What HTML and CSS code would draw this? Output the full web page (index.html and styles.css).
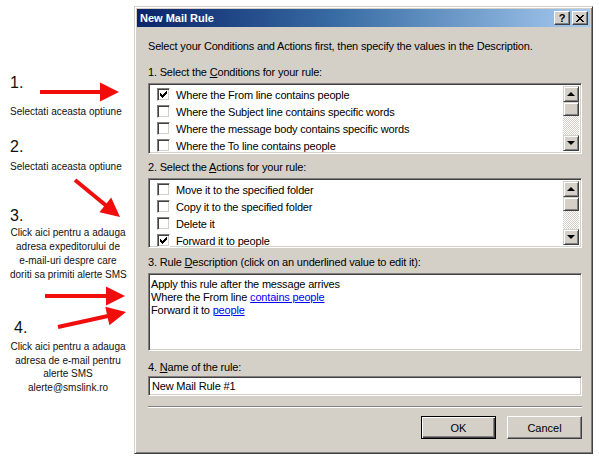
FILE: index.html
```html
<!DOCTYPE html>
<html lang="ro">
  <head>
    <meta charset="UTF-8" />
    <title>New Mail Rule</title>
    <link rel="stylesheet" href="styles.css">
  </head>
  <body>
    <aside class="notes">
      <div class="num">1.</div>
      <p class="hint hint-1">Selectati aceasta optiune</p>
      <div class="num num-2">2.</div>
      <p class="hint hint-2">Selectati aceasta optiune</p>
      <div class="num num-3">3.</div>
      <p class="hint hint-3">Click aici pentru a adauga<br />adresa expeditorului de<br />e-mail-uri despre care<br />doriti sa primiti alerte SMS</p>
      <div class="num num-4">4.</div>
      <p class="hint hint-4">Click aici pentru a adauga<br />adresa de e-mail pentru<br />alerte SMS<br />alerte@smslink.ro</p>

      <!-- red pointer arrows -->
      <svg class="arrows" width="134" height="465" viewBox="0 0 134 465">
        <g stroke="#f20d0d" stroke-width="4" fill="none">
          <line x1="40" y1="92" x2="102" y2="92" />
          <line x1="75" y1="180" x2="106" y2="205.5" />
          <line x1="45" y1="296" x2="108" y2="296" />
          <line x1="58" y1="327" x2="108" y2="316" />
        </g>
        <g fill="#f20d0d">
          <polygon points="100,82.5 119,92 100,101.5" />
          <polygon points="99.4,212.2 120,217 111.2,197.6" />
          <polygon points="106,286.5 125,296 106,305.5" />
          <polygon points="109.4,325.3 126,312 105.3,306.7" />
        </g>
      </svg>
    </aside>

    <main class="dialog">
      <div class="titlebar">
        <span class="title">New Mail Rule</span>
        <span class="cap-btn cap-help">?</span>
        <span class="cap-btn cap-close">
          <svg width="8" height="7" viewBox="0 0 8 7">
            <path d="M0 0h2v1h1v1h2v-1h1v-1h2v1h-1v1h-1v1h-1v1h1v1h1v1h1v1h-2v-1h-1v-1h-2v1h-1v1h-2v-1h1v-1h1v-1h1v-1h-1v-1h-1v-1h-1z" fill="#000" />
          </svg>
        </span>
      </div>

      <div class="content">
        <p class="intro">Select your Conditions and Actions first, then specify the values in the Description.</p>

        <p class="label label-1">1. Select the <u>C</u>onditions for your rule:</p>
        <div class="listbox">
          <ul class="rows">
            <li><span class="check on"></span>Where the From line contains people</li>
            <li><span class="check"></span>Where the Subject line contains specific words</li>
            <li><span class="check"></span>Where the message body contains specific words</li>
            <li><span class="check"></span>Where the To line contains people</li>
          </ul>
          <div class="scrollbar">
            <span class="sb-btn sb-up"></span>
            <span class="sb-thumb"></span>
            <span class="sb-track"></span>
            <span class="sb-btn sb-down"></span>
          </div>
        </div>

        <p class="label label-2">2. Select the <u>A</u>ctions for your rule:</p>
        <div class="listbox listbox-2">
          <ul class="rows">
            <li><span class="check"></span>Move it to the specified folder</li>
            <li><span class="check"></span>Copy it to the specified folder</li>
            <li><span class="check"></span>Delete it</li>
            <li><span class="check on"></span>Forward it to people</li>
          </ul>
          <div class="scrollbar">
            <span class="sb-btn sb-up"></span>
            <span class="sb-thumb"></span>
            <span class="sb-track"></span>
            <span class="sb-btn sb-down"></span>
          </div>
        </div>

        <p class="label label-3">3. Rule <u>D</u>escription (click on an underlined value to edit it):</p>
        <div class="description">
          <div>Apply this rule after the message arrives</div>
          <div>Where the From line <a href="#">contains people</a></div>
          <div>Forward it to <a href="#">people</a></div>
        </div>

        <p class="label label-4">4. <u>N</u>ame of the rule:</p>
        <div class="name-input">New Mail Rule #1</div>

        <hr class="separator" />

        <div class="actions">
          <button class="btn btn-default">OK</button>
          <button class="btn">Cancel</button>
        </div>
      </div>
    </main>
  </body>
</html>
```

FILE: styles.css
```css
/* Reset */
* {
  margin: 0;
  padding: 0;
  box-sizing: border-box;
}

body {
  width: 599px;
  height: 465px;
  overflow: hidden;
  background: #fff;
  display: flex;
  align-items: flex-start;
  position: relative;
  font-family: "Liberation Sans", Arial, sans-serif;
  color: #000;
}

/* Left hints */
.notes {
  width: 134px;
  flex-shrink: 0;
  padding: 74px 9px 0 10px;
  color: #111;
}

.num {
  font-size: 16px;
  line-height: 18px;
}

.num-2 {
  margin-top: 19px;
}

.num-3 {
  margin-top: 33px;
}

.num-4 {
  margin-top: 37px;
  padding-left: 4px;
}

.hint {
  font-size: 10px;
  line-height: 14px;
  white-space: nowrap;
}

.hint-1 {
  margin-top: 13px;
}

.hint-2 {
  margin-top: 4px;
}

.hint-3,
.hint-4 {
  text-align: center;
  width: 116px;
}

.hint-3 {
  margin-top: 1px;
}

.hint-4 {
  margin-top: 3px;
  line-height: 13.7px;
}

.arrows {
  position: absolute;
  left: 0;
  top: 0;
}

/* Dialog window */
.dialog {
  margin-top: 6px;
  width: 459px;
  height: 448px;
  background: #d4d0c8;
  border: 1px solid;
  border-color: #d4d0c8 #404040 #404040 #d4d0c8;
  box-shadow: inset 1px 1px #fff, inset -1px -1px #808080;
  padding: 2px;
  font-size: 11px;
  display: flex;
  flex-direction: column;
}

.titlebar {
  height: 18px;
  display: flex;
  align-items: center;
  gap: 2px;
  padding: 0 2px 0 3px;
  background: linear-gradient(to right, #0a246a 0%, #3a6ea5 45%, #a6caf0 100%);
}

.title {
  flex: 1;
  color: #fff;
  font-weight: 700;
  font-size: 11px;
}

.cap-btn {
  width: 16px;
  height: 14px;
  display: flex;
  align-items: center;
  justify-content: center;
  background: #d4d0c8;
  border: 1px solid;
  border-color: #fff #404040 #404040 #fff;
  box-shadow: inset -1px -1px #808080;
  font-weight: 700;
  font-size: 11px;
  line-height: 1;
}

/* Form content */
.content {
  padding: 0 8px 0 11px;
  display: flex;
  flex-direction: column;
  letter-spacing: -0.18px;
}

.intro {
  margin-top: 13px;
  line-height: 13px;
}

.label {
  line-height: 13px;
  margin-bottom: 4px;
}

.label-1 {
  margin-top: 13px;
}

.label-2 {
  margin-top: 7px;
}

.label-3 {
  margin-top: 8px;
}

.label-4 {
  margin-top: 10px;
  margin-bottom: 2px;
}

u {
  text-decoration: underline;
}

.listbox,
.description,
.name-input {
  background: #fff;
  border: 1px solid;
  border-color: #808080 #fff #fff #808080;
  box-shadow: inset 1px 1px #404040, inset -1px -1px #d4d0c8;
}

.listbox {
  height: 71px;
  padding: 2px;
  display: flex;
}

.listbox-2 {
  height: 70px;
}

.rows {
  list-style: none;
  flex: 1;
}

.rows li {
  height: 17px;
  display: flex;
  align-items: center;
  gap: 6px;
  padding-left: 6px;
  white-space: nowrap;
}

.check {
  width: 13px;
  height: 13px;
  flex-shrink: 0;
  background: #fff;
  border: 1px solid;
  border-color: #808080 #fff #fff #808080;
  box-shadow: inset 1px 1px #404040, inset -1px -1px #d4d0c8;
}

.check.on {
  background: #fff url("data:image/svg+xml,%3Csvg xmlns='http://www.w3.org/2000/svg' width='7' height='7'%3E%3Cpath d='M0 2h1v1h1v1h1v-1h1v-1h1v-1h1v-1h1v3h-1v1h-1v1h-1v1h-1v1h-1v-1h-1v-1h-1z' fill='%23000'/%3E%3C/svg%3E") no-repeat 2px 2px;
}

.scrollbar {
  width: 16px;
  display: flex;
  flex-direction: column;
}

.sb-btn,
.sb-thumb {
  background: #d4d0c8;
  border: 1px solid;
  border-color: #d4d0c8 #404040 #404040 #d4d0c8;
  box-shadow: inset 1px 1px #fff, inset -1px -1px #808080;
}

.sb-btn {
  height: 16px;
  display: flex;
  align-items: center;
  justify-content: center;
}

.sb-btn::after {
  content: "";
  width: 0;
  height: 0;
  border-left: 4px solid transparent;
  border-right: 4px solid transparent;
}

.sb-up::after {
  border-bottom: 4px solid #000;
}

.sb-down::after {
  border-top: 4px solid #000;
}

.sb-thumb {
  height: 14px;
}

.sb-track {
  flex: 1;
  background: repeating-conic-gradient(#fff 0 25%, #d4d0c8 0 50%) 0 0 / 2px 2px;
}

.description {
  height: 78px;
  padding: 4px 2px 0;
  line-height: 13px;
}

.description a {
  color: #0000ff;
  text-decoration: underline;
}

.name-input {
  height: 20px;
  padding: 0 3px;
  display: flex;
  align-items: center;
}

.separator {
  margin-top: 10px;
  border: none;
  border-top: 1px solid #808080;
  border-bottom: 1px solid #fff;
}

.actions {
  margin-top: 8px;
  display: flex;
  justify-content: flex-end;
  gap: 11px;
}

.btn {
  width: 75px;
  height: 23px;
  font-family: inherit;
  font-size: 11px;
  color: #000;
  background: #d4d0c8;
  border: 1px solid;
  border-color: #fff #404040 #404040 #fff;
  box-shadow: inset -1px -1px #808080;
}

.btn-default {
  border: 1px solid #000;
  box-shadow: inset 1px 1px #fff, inset -1px -1px #404040, inset -2px -2px #808080;
}
```
